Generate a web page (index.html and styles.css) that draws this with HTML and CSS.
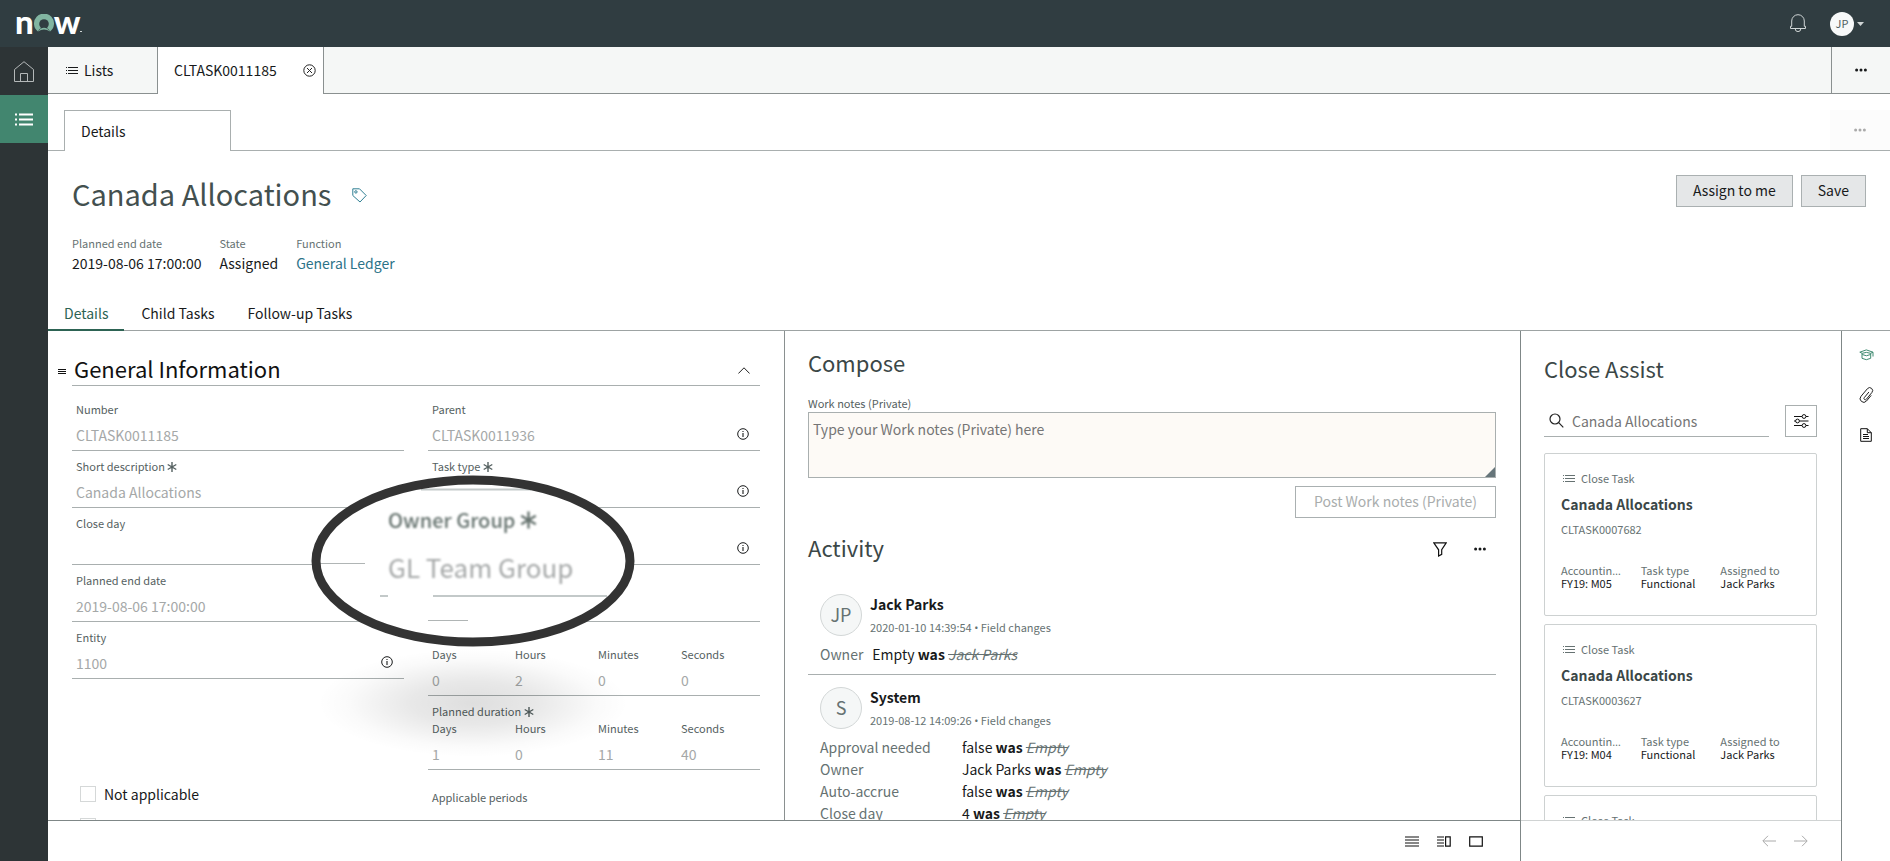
FILE: index.html
```html
<!DOCTYPE html>
<html lang="en">
<head>
    <meta charset="UTF-8">
    <meta name="viewport" content="width=device-width, initial-scale=1.0">
    <title>CLTASK0011185 | Canada Allocations</title>
    <link rel="stylesheet" href="styles.css">
</head>
<body>
    <!-- shared icons -->
    <svg class="sprite" aria-hidden="true">
        <symbol id="i-list" viewBox="0 0 12 8"><path d="M0 1.5h1M0 4.5h1M0 7.5h1M2 1.5h10M2 4.5h10M2 7.5h10" stroke="currentColor"/></symbol>
        <symbol id="i-dots" viewBox="0 0 12 4"><g fill="currentColor"><circle cx="1.6" cy="2" r="1.5"/><circle cx="6" cy="2" r="1.5"/><circle cx="10.4" cy="2" r="1.5"/></g></symbol>
        <symbol id="i-info" viewBox="0 0 12 12"><circle cx="6" cy="6" r="5.3" fill="none" stroke="currentColor"/><path d="M6 5v4M6 3v1.1" stroke="currentColor" stroke-width="1.1"/></symbol>
        <symbol id="i-star" viewBox="0 0 10 10"><path d="M5 0v10M.7 2.5l8.6 5M9.3 2.5l-8.6 5" stroke="currentColor" stroke-width="1.4"/></symbol>
    </svg>

    <header class="topbar">
        <div class="logo">
            <span>n</span>
            <svg width="20" height="18" viewBox="0 0 20 18" role="img" aria-label="o"><path d="M4 17.6A10 10 0 1 1 16 17.6 6.5 6.5 0 0 0 4 17.6z" fill="#81b5a1"/><circle cx="10" cy="10" r="4.8" fill="#303d41"/><path d="M6.6 14.8Q10 12.8 13.4 14.8L16 17.6Q10 13.5 4 17.6z" fill="#81b5a1"/></svg>
            <span>w</span><i></i>
        </div>
        <div class="topbar-right">
            <button class="icon-btn" aria-label="Notifications">
                <svg width="16" height="19" viewBox="0 0 16 19" fill="none" stroke="#cfd5d5"><path d="M.5 14.5h15v-2.2H14.300V7A6.300 6.300 0 0 0 1.700 7v5.300H.5zM5.200 14.800a2.800 2.800 0 0 0 5.600 0"/></svg>
            </button>
            <button class="icon-btn user" aria-label="User menu">
                <span class="user-avatar">JP</span>
                <svg width="7" height="4" viewBox="0 0 7 4"><path d="M0 0h7L3.500 4z" fill="#cfd5d5"/></svg>
            </button>
        </div>
    </header>

    <div class="shell">
        <nav class="sidebar">
            <a href="#" aria-label="Home"><svg width="20" height="21" viewBox="0 0 20 21" fill="none" stroke="#b4b8b9"><path d="M.5 20.500V8.500L10 .7l9.500 7.800v12zM6.500 20.500v-8h7v8"/></svg></a>
            <a href="#" class="active" aria-label="Lists"><svg width="18" height="13" viewBox="0 0 18 13" stroke="#fff" stroke-width="2"><path d="M0 1.500h2M0 6.500h2M0 11.500h2M4 1.500h14M4 6.500h14M4 11.500h14"/></svg></a>
        </nav>

        <main class="workspace">
            <div class="tabbar">
                <a href="#" class="tab tab-lists"><svg width="12" height="8"><use href="#i-list"/></svg>Lists</a>
                <div class="tab tab-record">
                    <span>CLTASK0011185</span>
                    <button class="icon-btn" aria-label="Close tab"><svg width="13" height="13" viewBox="0 0 13 13" fill="none" stroke="#222"><circle cx="6.500" cy="6.500" r="5.700"/><path d="M4 4l5 5M9 4l-5 5"/></svg></button>
                </div>
                <div class="tab-fill"></div>
                <button class="icon-btn tab-more" aria-label="More tabs"><svg width="12" height="4"><use href="#i-dots"/></svg></button>
            </div>
            <div class="subtabs">
                <a href="#" class="subtab">Details</a>
                <button class="icon-btn subtab-more" aria-label="More" disabled><svg width="12" height="4"><use href="#i-dots"/></svg></button>
            </div>

            <section class="record-header">
                <div class="title-row">
                    <h1>Canada Allocations</h1>
                    <button class="icon-btn" aria-label="Add tag"><svg width="15" height="15" viewBox="0 0 15 15" fill="none" stroke="#2f7f93"><path d="M.8.8h6.700l6.700 6.700-6.200 6.500L.8 7.500z"/><circle cx="3.900" cy="3.900" r="1.200"/></svg></button>
                    <div class="actions">
                        <button class="btn">Assign to me</button>
                        <button class="btn">Save</button>
                    </div>
                </div>
                <dl class="meta">
                    <div><dt>Planned end date</dt><dd>2019-08-06 17:00:00</dd></div>
                    <div><dt>State</dt><dd>Assigned</dd></div>
                    <div><dt>Function</dt><dd><a href="#">General Ledger</a></dd></div>
                </dl>
            </section>
            <nav class="record-tabs">
                <a href="#" class="active">Details</a>
                <a href="#">Child Tasks</a>
                <a href="#">Follow-up Tasks</a>
            </nav>

            <div class="content">
                <div class="primary">
                    <div class="panels">
                        <section class="form-panel">
                            <div class="section-head">
                                <svg class="grip" width="8" height="6" viewBox="0 0 8 6" stroke="#111"><path d="M0 .5h8M0 2.500h8M0 4.500h8"/></svg>
                                <h2>General Information</h2>
                                <button class="icon-btn" aria-label="Collapse"><svg width="12" height="7" viewBox="0 0 12 7" fill="none" stroke="#222"><path d="M.4 6.500L6 .8l5.600 5.700"/></svg></button>
                            </div>
                            <div class="form-grid">
                                <div class="form-col">
                                    <div class="field"><label for="number">Number</label><div class="control"><input id="number" value="CLTASK0011185" readonly></div></div>
                                    <div class="field"><label for="short">Short description <svg width="10" height="10"><use href="#i-star"/></svg></label><div class="control"><input id="short" value="Canada Allocations" readonly></div></div>
                                    <div class="field"><label for="closeday">Close day</label><div class="control"><input id="closeday" readonly></div></div>
                                    <div class="field"><label for="enddate">Planned end date</label><div class="control"><input id="enddate" value="2019-08-06 17:00:00" readonly></div></div>
                                    <div class="field"><label for="entity">Entity</label><div class="control"><input id="entity" value="1100" readonly><button class="icon-btn" aria-label="Entity info"><svg width="12" height="12"><use href="#i-info"/></svg></button></div></div>
                                    <div class="checks">
                                        <label><input type="checkbox"> Not applicable</label>
                                        <label><input type="checkbox"></label>
                                    </div>
                                </div>
                                <div class="form-col">
                                    <div class="field"><label for="parent">Parent</label><div class="control"><input id="parent" value="CLTASK0011936" readonly><button class="icon-btn" aria-label="Parent info"><svg width="12" height="12"><use href="#i-info"/></svg></button></div></div>
                                    <div class="field"><label for="tasktype">Task type <svg width="10" height="10"><use href="#i-star"/></svg></label><div class="control"><input id="tasktype" readonly><button class="icon-btn" aria-label="Task type info"><svg width="12" height="12"><use href="#i-info"/></svg></button></div></div>
                                    <div class="field"><div class="control tall"><input aria-label="Owner Group" readonly><button class="icon-btn" aria-label="Owner group info"><svg width="12" height="12"><use href="#i-info"/></svg></button></div></div>
                                    <div class="field"><div class="control tall"><input aria-label="Owner" readonly></div></div>
                                    <fieldset class="duration">
                                        <legend></legend>
                                        <div class="parts">
                                            <label>Days<input value="0" readonly></label>
                                            <label>Hours<input value="2" readonly></label>
                                            <label>Minutes<input value="0" readonly></label>
                                            <label>Seconds<input value="0" readonly></label>
                                        </div>
                                    </fieldset>
                                    <fieldset class="duration">
                                        <legend>Planned duration <svg width="10" height="10"><use href="#i-star"/></svg></legend>
                                        <div class="parts">
                                            <label>Days<input value="1" readonly></label>
                                            <label>Hours<input value="0" readonly></label>
                                            <label>Minutes<input value="11" readonly></label>
                                            <label>Seconds<input value="40" readonly></label>
                                        </div>
                                    </fieldset>
                                    <div class="field periods"><label for="periods">Applicable periods</label><div class="control"><input id="periods" readonly></div></div>
                                </div>
                            </div>

                            <!-- magnifier over the owner group field -->
                            <div class="lens-shadow"></div>
                            <div class="lens">
                                <svg width="324" height="174" viewBox="0 0 324 174">
                                    <ellipse cx="162" cy="87" rx="157" ry="81" fill="#fff"/>
                                    <path d="M9 89.500h45M117 146.500h40" stroke="#b0b5b5"/>
                                    <path d="M110 15.500h110M122 122h174M69 122h8" stroke="#c3c9c9" stroke-width="2"/>
                                    <ellipse cx="162" cy="87" rx="157" ry="81" fill="none" stroke="#333" stroke-width="9"/>
                                </svg>
                                <div class="lens-text">
                                    <div class="lens-label">Owner Group <svg width="17" height="18"><use href="#i-star"/></svg></div>
                                    <div class="lens-value">GL Team Group</div>
                                </div>
                            </div>
                        </section>

                        <section class="activity-panel">
                            <h2>Compose</h2>
                            <label class="notes-label" for="notes">Work notes (Private)</label>
                            <div class="notes"><textarea id="notes" placeholder="Type your Work notes (Private) here"></textarea></div>
                            <div class="post"><button class="btn btn-ghost" disabled>Post Work notes (Private)</button></div>
                            <div class="activity-head">
                                <h2>Activity</h2>
                                <button class="icon-btn" aria-label="Filter activity"><svg width="14" height="15" viewBox="0 0 14 15" fill="none" stroke="#111" stroke-width="1.200"><path d="M.8.800h12.400L8.700 7.800v4.500L5.600 14V7.800z"/></svg></button>
                                <button class="icon-btn" aria-label="More"><svg width="12" height="4"><use href="#i-dots"/></svg></button>
                            </div>
                            <article class="entry">
                                <div class="entry-head">
                                    <span class="avatar">JP</span>
                                    <div><strong>Jack Parks</strong><small>2020-01-10 14:39:54 <span class="punct">•</span> Field changes</small></div>
                                </div>
                                <table>
                                    <tr><th>Owner</th><td>Empty <b>was</b> <del>Jack Parks</del></td></tr>
                                </table>
                            </article>
                            <article class="entry">
                                <div class="entry-head">
                                    <span class="avatar">S</span>
                                    <div><strong>System</strong><small>2019-08-12 14:09:26 <span class="punct">•</span> Field changes</small></div>
                                </div>
                                <table class="wide">
                                    <tr><th>Approval needed</th><td>false <b>was</b> <del>Empty</del></td></tr>
                                    <tr><th>Owner</th><td>Jack Parks <b>was</b> <del>Empty</del></td></tr>
                                    <tr><th>Auto-accrue</th><td>false <b>was</b> <del>Empty</del></td></tr>
                                    <tr><th>Close day</th><td>4 <b>was</b> <del>Empty</del></td></tr>
                                </table>
                            </article>
                        </section>
                    </div>
                    <footer class="layout-bar">
                        <button class="icon-btn" aria-label="Single column"><svg width="14" height="11" viewBox="0 0 14 11" stroke="#111" stroke-width="1.200"><path d="M0 1h14M0 4h14M0 7h14M0 10h14"/></svg></button>
                        <button class="icon-btn" aria-label="Split view"><svg width="14" height="11" viewBox="0 0 14 11" fill="none" stroke="#111" stroke-width="1.200"><path d="M0 1h7M0 4h7M0 7h7M0 10h7M8.600.8h4.600v9.400H8.600z"/></svg></button>
                        <button class="icon-btn" aria-label="Full view"><svg width="14" height="11" viewBox="0 0 14 11" fill="none" stroke="#111" stroke-width="1.200"><path d="M.7.800h12.600v9.400H.7z"/></svg></button>
                    </footer>
                </div>

                <aside class="assist">
                    <div class="assist-body">
                        <h2>Close Assist</h2>
                        <div class="search-row">
                            <label class="search">
                                <svg width="15" height="15" viewBox="0 0 15 15" fill="none" stroke="#222" stroke-width="1.200"><circle cx="6" cy="6" r="5"/><path d="M9.700 9.700l4.600 4.600"/></svg>
                                <input type="text" value="Canada Allocations" aria-label="Search">
                            </label>
                            <button class="icon-btn search-filter" aria-label="Search options"><svg width="15" height="14" viewBox="0 0 15 14" fill="none" stroke="#111"><path d="M0 2.500h8M12 2.500h2.500M0 7h1.500M5.500 7h9M0 11.500h8M12 11.500h2.500"/><circle cx="10" cy="2.500" r="1.900"/><circle cx="3.500" cy="7" r="1.900"/><circle cx="10" cy="11.500" r="1.900"/></svg></button>
                        </div>
                        <div class="card">
                            <div class="card-type"><svg width="12" height="8"><use href="#i-list"/></svg>Close Task</div>
                            <h3>Canada Allocations</h3>
                            <div class="card-number">CLTASK0007682</div>
                            <dl>
                                <div><dt>Accountin<span class="punct">…</span></dt><dd>FY19: M05</dd></div>
                                <div><dt>Task type</dt><dd>Functional</dd></div>
                                <div><dt>Assigned to</dt><dd>Jack Parks</dd></div>
                            </dl>
                        </div>
                        <div class="card">
                            <div class="card-type"><svg width="12" height="8"><use href="#i-list"/></svg>Close Task</div>
                            <h3>Canada Allocations</h3>
                            <div class="card-number">CLTASK0003627</div>
                            <dl>
                                <div><dt>Accountin<span class="punct">…</span></dt><dd>FY19: M04</dd></div>
                                <div><dt>Task type</dt><dd>Functional</dd></div>
                                <div><dt>Assigned to</dt><dd>Jack Parks</dd></div>
                            </dl>
                        </div>
                        <div class="card">
                            <div class="card-type"><svg width="12" height="8"><use href="#i-list"/></svg>Close Task</div>
                        </div>
                    </div>
                    <footer class="pager">
                        <button class="icon-btn" aria-label="Previous" disabled><svg width="14" height="12" viewBox="0 0 14 12" fill="none" stroke="currentColor"><path d="M14 6H1M6 .8L.8 6 6 11.200"/></svg></button>
                        <button class="icon-btn" aria-label="Next" disabled><svg width="14" height="12" viewBox="0 0 14 12" fill="none" stroke="currentColor"><path d="M0 6h13M8 .8L13.200 6 8 11.200"/></svg></button>
                    </footer>
                </aside>

                <nav class="rail">
                    <button class="icon-btn" aria-label="Close Assist"><svg width="15" height="12" viewBox="0 0 15 12" fill="none" stroke="#3f8a70"><path d="M7.300.9L.8 3.200l2.400 1.100Q7.300 2.500 11.600 4.300L14 3.200zM3 4.300v5q4.300 2.800 8.700 0v-5M3.200 5.500q4.200 2.500 8.400 0M14 3.200v4.300"/></svg></button>
                    <button class="icon-btn" aria-label="Attachments"><svg width="15" height="16" viewBox="0 0 15 16" fill="none" stroke="#222"><path d="M9.900 5L5.300 10.600a1.300 1.300 0 0 0 2 1.700L12.900 5.500a2.900 2.900 0 0 0-4.500-3.800L2 9.300a3.600 3.600 0 0 0 5.500 4.700L12.200 8.400"/></svg></button>
                    <button class="icon-btn" aria-label="Templates"><svg width="12" height="14" viewBox="0 0 12 14" fill="none" stroke="#111"><path d="M.7.700h6.600l4 4v8.600H.7zM7.300.700v4h4M3 6.500h5M3 8.500h6M3 10.500h6"/></svg></button>
                </nav>
            </div>
        </main>
    </div>
</body>
</html>
```
FILE: styles.css
```css
* {
    box-sizing: border-box;
}
body, html {
    margin: 0;
    padding: 0;
    height: 100%;
}
body {
    display: flex;
    flex-direction: column;
    height: 100vh;
    overflow: hidden;
    font-family: 'Noto Sans CJK SC', 'Noto Sans', sans-serif;
    font-size: 14px;
    line-height: 20px;
    color: #181a1b;
    background: #fff;
}
h1, h2, h3, dl, dd {
    margin: 0;
    font-weight: normal;
}
a {
    color: inherit;
    text-decoration: none;
}
svg {
    flex: none;
}
input, textarea, button {
    font: inherit;
    color: inherit;
}
.sprite {
    position: absolute;
    width: 0;
    height: 0;
}
.punct {
    font-family: 'Open Sans', sans-serif;
}
.icon-btn {
    display: flex;
    align-items: center;
    justify-content: center;
    padding: 0;
    border: none;
    background: none;
    cursor: pointer;
}

/* top bar */
.topbar {
    display: flex;
    justify-content: space-between;
    align-items: center;
    flex: none;
    height: 47px;
    padding: 0 26px 0 15px;
    background: #303d41;
}
.logo {
    display: flex;
    align-items: center;
    font-family: Lato, sans-serif;
    font-size: 33px;
    font-weight: 900;
    line-height: 40px;
    color: #fff;
}
.logo span {
    padding-bottom: 6px;
}
.logo svg {
    margin-bottom: 1px;
}
.logo i {
    align-self: center;
    width: 2px;
    height: 1px;
    margin-top: 15px;
    background: #cfd5d5;
}
.topbar-right {
    display: flex;
    align-items: center;
    gap: 24px;
}
.user {
    gap: 3px;
}
.user-avatar {
    width: 24px;
    height: 24px;
    border-radius: 50%;
    background: #f7f9f9;
    color: #4f5d5f;
    font-size: 11px;
    line-height: 22px;
}

/* shell */
.shell {
    display: flex;
    flex: 1;
    min-height: 0;
}
.sidebar {
    flex: none;
    width: 48px;
    background: #2d3436;
}
.sidebar a {
    display: flex;
    align-items: center;
    justify-content: center;
    height: 48px;
}
.sidebar .active {
    background: #42866f;
}
.workspace {
    display: flex;
    flex-direction: column;
    flex: 1;
    min-width: 0;
}

/* tabs */
.tabbar {
    display: flex;
    flex: none;
    height: 47px;
    background: #f5f7f6;
}
.tab {
    display: flex;
    align-items: center;
    border-right: 1px solid #8a9090;
}
.tab-lists {
    gap: 6px;
    width: 110px;
    padding-left: 18px;
    border-bottom: 1px solid #8a9090;
}
.tab-record {
    justify-content: space-between;
    width: 166px;
    padding: 0 7px 1px 16px;
    background: #fff;
}
.tab-fill {
    flex: 1;
    border-bottom: 1px solid #8a9090;
}
.tab-more {
    width: 59px;
    border-left: 1px solid #8a9090;
    border-bottom: 1px solid #8a9090;
}
.subtabs {
    display: flex;
    justify-content: space-between;
    flex: none;
    height: 41px;
    margin-top: 16px;
    padding-left: 16px;
    box-shadow: inset 0 -1px #a9afaf;
}
.subtab {
    width: 167px;
    padding: 10px 16px;
    border: 1px solid #a9afaf;
    border-bottom: none;
    background: #fff;
}
.subtab-more {
    width: 60px;
    height: 40px;
    background: #fcfcfc;
    color: #aaa;
}

/* record header */
.record-header {
    flex: none;
    padding: 24px 24px 0;
}
.title-row {
    display: flex;
    align-items: flex-start;
    gap: 21px;
}
.title-row .icon-btn {
    height: 40px;
}
h1 {
    font-size: 29px;
    line-height: 36px;
    color: #43504f;
}
h2 {
    padding-bottom: 4px;
    font-size: 22px;
    line-height: 26px;
    color: #3b4747;
}
.actions {
    display: flex;
    gap: 8px;
    margin-left: auto;
}
.btn {
    height: 32px;
    padding: 0 16px 2px;
    border: 1px solid #aab0b1;
    background: #e5e7e8;
    line-height: 20px;
}
.btn-ghost {
    padding: 0 18px 2px;
    background: #fff;
    color: #a9adad;
}
.meta {
    display: flex;
    gap: 18px;
    margin-top: 20px;
}
dt {
    font-size: 11px;
    line-height: 16px;
    color: #667272;
}
.meta dd {
    margin-top: 2px;
}
.meta a {
    color: #2c7388;
}
.record-tabs {
    display: flex;
    flex: none;
    gap: 1px;
    height: 33px;
    margin-top: 25px;
    box-shadow: inset 0 -1px #9da3a3;
}
.record-tabs a {
    padding: 5px 16px 0;
}
.record-tabs .active {
    color: #2d6353;
    border-bottom: 2px solid #2d6353;
}

/* content area */
.content {
    display: flex;
    flex: 1;
    min-height: 0;
}
.primary {
    display: flex;
    flex-direction: column;
    flex: 1;
    min-width: 0;
}
.panels {
    display: grid;
    grid-template-columns: 1fr 1fr;
    flex: 1;
    min-height: 0;
}
.form-panel, .activity-panel, .assist-body {
    overflow: auto;
    scrollbar-width: none;
}
.form-panel {
    position: relative;
    padding: 24px 24px 0;
}
.activity-panel {
    padding: 18px 24px 0 23px;
    border-left: 1px solid #8a9090;
}
.layout-bar, .pager {
    display: flex;
    justify-content: flex-end;
    align-items: center;
    flex: none;
    gap: 18px;
    height: 41px;
    padding-right: 37px;
    border-top: 1px solid #7f8787;
}
.pager {
    padding-right: 33px;
    border-top-color: #d0d3d3;
}
.pager .icon-btn {
    color: #aaa;
}

/* form */
.section-head {
    display: flex;
    align-items: center;
    border-bottom: 1px solid #a9afaf;
    padding-right: 10px;
}
.section-head h2 {
    flex: 1;
    color: #111;
}
.grip {
    margin: 4px 8px 0 -14px;
    shape-rendering: crispEdges;
}
.form-grid {
    display: grid;
    grid-template-columns: 1fr 1fr;
    gap: 24px;
    margin-top: 8px;
}
.field {
    height: 57px;
    padding-top: 7px;
    border-bottom: 1px solid #a9afaf;
}
.field > label, .duration legend, .parts label {
    display: block;
    padding: 0 4px;
    font-size: 11px;
    line-height: 16px;
    color: #556161;
}
.field label svg, legend svg {
    vertical-align: -1px;
}
.control {
    display: flex;
    align-items: center;
    padding: 1px 11px 0 0;
}
.control.tall {
    padding-top: 17px;
}
.control input, .parts input {
    flex: 1;
    min-width: 0;
    width: 100%;
    height: 32px;
    padding: 2px 4px 0;
    border: none;
    background: none;
    color: #a5a8a8;
    font-size: 14px;
}
.duration {
    height: 74px;
    margin: 0;
    padding: 7px 0 0;
    border: none;
    border-bottom: 1px solid #a9afaf;
}
.duration legend {
    float: left;
    width: 100%;
    height: 17px;
}
.parts {
    display: grid;
    grid-template-columns: repeat(4, 1fr);
    clear: both;
}
.parts input {
    display: block;
    padding: 3px 0 0;
}
.periods {
    margin-top: 12px;
}
.checks {
    display: flex;
    flex-direction: column;
    margin: 99px 0 0 8px;
}
.checks label {
    display: flex;
    align-items: center;
    gap: 8px;
    height: 32px;
}
.checks input {
    appearance: none;
    width: 16px;
    height: 16px;
    margin: 0;
    border: 1px solid #d5d8d8;
}

/* magnifier */
.lens, .lens-shadow {
    position: absolute;
    pointer-events: none;
}
.lens {
    top: 143px;
    left: 263px;
}
.lens-shadow {
    top: 318px;
    left: 270px;
    width: 310px;
    height: 108px;
    background: radial-gradient(closest-side, rgba(0, 0, 0, 0.13), rgba(0, 0, 0, 0.09) 40%, rgba(0, 0, 0, 0.02) 80%, transparent);
}
.lens-text {
    position: absolute;
    top: 31px;
    left: 77px;
    white-space: nowrap;
    filter: blur(1px);
}
.lens-label {
    font-size: 20px;
    font-weight: 500;
    line-height: 30px;
    color: #66736f;
}
.lens-label svg {
    vertical-align: -1px;
}
.lens-value {
    margin-top: 15px;
    font-size: 26px;
    line-height: 34px;
    color: #a5a8a8;
}

/* compose and activity */
.notes-label {
    display: block;
    margin-top: 16px;
    padding-bottom: 1px;
    font-size: 11px;
    line-height: 16px;
    color: #556161;
}
.notes {
    position: relative;
    height: 66px;
}
.notes::after {
    content: "";
    position: absolute;
    right: 1px;
    bottom: 1px;
    border-bottom: 10px solid #66757a;
    border-left: 10px solid transparent;
}
.notes textarea {
    display: block;
    width: 100%;
    height: 100%;
    padding: 6px 4px;
    border: 1px solid #a9afaf;
    background: #fdfaf6;
    resize: none;
}
.notes textarea::placeholder {
    color: #757575;
}
.post {
    display: flex;
    justify-content: flex-end;
    margin-top: 8px;
}
.activity-head {
    display: flex;
    gap: 27px;
    margin: 16px 0 18px;
    padding-right: 10px;
}
.activity-head h2 {
    flex: 1;
}
.entry {
    padding: 12px 12px 8px;
    border-bottom: 1px solid #a9afaf;
}
.entry-head {
    display: flex;
    gap: 8px;
    margin-bottom: 8px;
}
.avatar {
    width: 42px;
    height: 42px;
    border: 1px solid #d3d7d7;
    border-radius: 50%;
    background: #f5f7f7;
    color: #667272;
    font-size: 18px;
    line-height: 38px;
    text-align: center;
}
.entry strong, .entry small {
    display: block;
}
.entry strong {
    line-height: 20px;
}
.entry small {
    margin-top: 5px;
    font-size: 11px;
    line-height: 16px;
    color: #667272;
}
table {
    border-collapse: collapse;
}
th, td {
    padding: 0 0 2px;
    line-height: 20px;
    text-align: left;
    font-weight: normal;
}
th {
    padding-right: 9px;
    color: #667272;
}
.wide th {
    width: 142px;
}
del {
    color: #667272;
    font-style: italic;
}

/* close assist */
.assist {
    display: flex;
    flex-direction: column;
    flex: none;
    width: 321px;
    border-left: 1px solid #7f8787;
}
.assist-body {
    flex: 1;
    min-height: 0;
    padding: 24px 24px 0 23px;
}
.search-row {
    display: flex;
    gap: 16px;
    margin: 20px 0 16px;
}
.search {
    display: flex;
    align-items: center;
    flex: 1;
    gap: 6px;
    height: 32px;
    padding-left: 5px;
    border-bottom: 1px solid #a9afaf;
}
.search input {
    width: 100%;
    padding: 2px;
    border: none;
    color: #757575;
}
.search-filter {
    width: 32px;
    height: 32px;
    border: 1px solid #a9afaf;
}
.card {
    height: 163px;
    margin-bottom: 8px;
    padding: 16px;
    border: 1px solid #cdd1d1;
    border-radius: 2px;
}
.card-type {
    display: flex;
    align-items: center;
    gap: 6px;
    padding-left: 2px;
}
.card-type, .card-number {
    font-size: 11px;
    line-height: 16px;
    color: #667272;
}
.card h3 {
    margin: 8px 0 7px;
    font-size: 14px;
    font-weight: bold;
    line-height: 20px;
    color: #3b4747;
}
.card dl {
    display: grid;
    grid-template-columns: repeat(3, 1fr);
    margin-top: 27px;
}
.card dl div {
    min-width: 0;
}
.card dt, .card dd {
    white-space: nowrap;
    font-size: 11px;
    line-height: 13px;
}
.rail {
    display: flex;
    flex-direction: column;
    flex: none;
    width: 49px;
    padding-top: 4px;
    border-left: 1px solid #7f8787;
}
.rail .icon-btn {
    height: 40px;
}
```
